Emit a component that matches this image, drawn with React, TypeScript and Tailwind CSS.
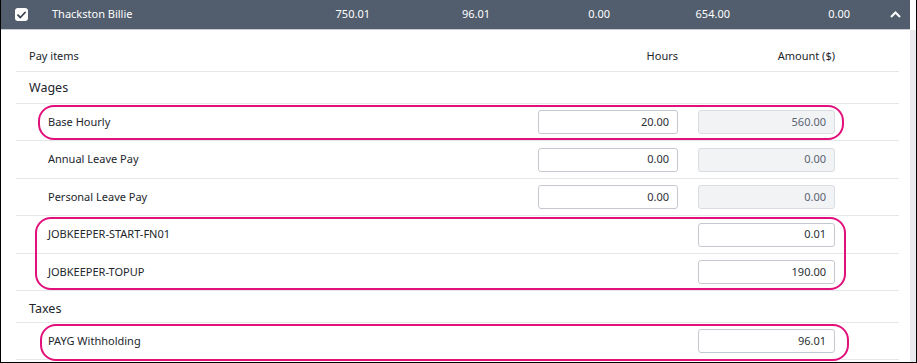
import React from 'react';

const font = { fontFamily: '"Segoe UI", "Noto Sans", "Liberation Sans", sans-serif' };

const headerTotals = ['750.01', '96.01', '0.00', '654.00', '0.00'];

function NumberInput({ value, disabled }: { value: string; disabled?: boolean }) {
  return (
    <div
      className={`h-[24px] flex items-center justify-end pr-[8px] rounded-[3px] border text-[11px] ${
        disabled ? 'w-[137px] bg-[#f2f3f5] border-[#d9dce0] text-[#5a6472]' : 'bg-white border-[#c5c8ce] text-[#2b2f36]'
      }`}
    >
      {value}
    </div>
  );
}

function PayRow({
  label,
  hours,
  amount,
  amountEditable,
  tall,
}: {
  label: string;
  hours?: string;
  amount: string;
  amountEditable?: boolean;
  tall?: boolean;
}) {
  return (
    <div className={`${tall ? 'h-[38px]' : 'h-[37px]'} flex items-center border-b border-[#e6e7ea] pl-[32px] pr-[64px]`}>
      <div className="flex-1 text-[11px] text-[#22262c]">{label}</div>
      <div className="w-[140px]">{hours && <NumberInput value={hours} />}</div>
      <div className="w-[137px] ml-[20px]">
        <NumberInput value={amount} disabled={!amountEditable} />
      </div>
    </div>
  );
}

function Highlight({ className }: { className: string }) {
  return <div className={`absolute border-2 border-[#e2107a] rounded-[16px] pointer-events-none ${className}`} />;
}

export default function App() {
  return (
    <div style={font} className="w-[917px] h-[363px] bg-white border-l border-r border-b border-black overflow-hidden flex flex-col">
      <div className="flex flex-1 min-h-0">
        <div className="w-[909px] flex flex-col">
          <div className="h-[30px] bg-[#525e6e] flex items-center text-white text-[11px] border-b border-[#c9ccd1]">
            <div className="w-[51px] flex pl-[14px]">
              <div className="w-[13px] h-[13px] bg-white rounded-[3px] flex items-center justify-center">
                <svg width="9" height="8" viewBox="0 0 9 8">
                  <path d="M1 4.2 L3.4 6.5 L8 1.5" fill="none" stroke="#3d4654" strokeWidth="1.8" strokeLinecap="round" strokeLinejoin="round" />
                </svg>
              </div>
            </div>
            <div className="w-[198px]">Thackston Billie</div>
            {headerTotals.map((t, i) => (
              <div key={i} className="w-[120px] text-right">
                {t}
              </div>
            ))}
            <div className="flex-1 flex justify-end pr-[9px]">
              <svg width="11" height="7" viewBox="0 0 11 7">
                <path d="M1 6 L5.5 1.5 L10 6" fill="none" stroke="white" strokeWidth="2" />
              </svg>
            </div>
          </div>

          <div className="pl-[15px] pr-[11px] flex flex-col text-[#22262c]">
            <div className="h-[42px] flex items-end border-b border-[#e6e7ea] pl-[13px] pr-[64px] pb-[7px] text-[11px]">
              <div className="flex-1">Pay items</div>
              <div className="w-[140px] text-right">Hours</div>
              <div className="w-[137px] ml-[20px] text-right">Amount ($)</div>
            </div>

            <div className="h-[32px] flex items-center border-b border-[#e6e7ea] pl-[13px] pt-[2px] text-[12.5px]">Wages</div>

            <div className="relative">
              <PayRow label="Base Hourly" hours="20.00" amount="560.00" />
              <Highlight className="left-[22px] right-[55px] top-[1px] bottom-[1px]" />
            </div>
            <PayRow label="Annual Leave Pay" hours="0.00" amount="0.00" tall />
            <PayRow label="Personal Leave Pay" hours="0.00" amount="0.00" />

            <div className="relative">
              <PayRow label="JOBKEEPER-START-FN01" amount="0.01" amountEditable tall />
              <PayRow label="JOBKEEPER-TOPUP" amount="190.00" amountEditable />
              <Highlight className="left-[19px] right-[53px] top-[1px] bottom-[1px]" />
            </div>

            <div className="h-[32px] flex items-center border-b border-[#e6e7ea] pl-[13px] pt-[5px] text-[12.5px]">Taxes</div>

            <div className="relative">
              <PayRow label="PAYG Withholding" amount="96.01" amountEditable />
              <Highlight className="left-[24px] right-[50px] top-[1px] bottom-[-1px]" />
            </div>
          </div>
        </div>
        <div className="w-[6px] bg-[#e9eaed] mt-[30px]" />
      </div>
    </div>
  );
}
